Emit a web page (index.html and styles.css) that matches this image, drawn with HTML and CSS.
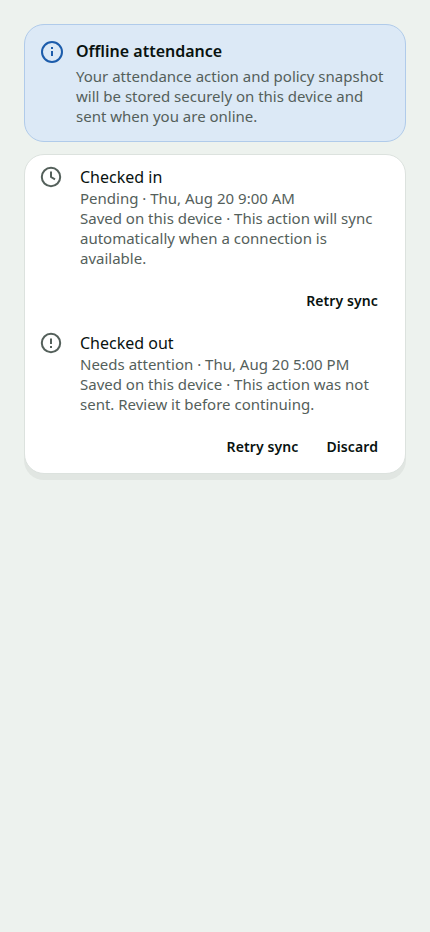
FILE: index.html
```html
<!DOCTYPE html>
<html lang="en">
<head>
<meta charset="utf-8">
<title>Offline attendance</title>
<link rel="stylesheet" href="styles.css">
</head>
<body>
<main class="page">
  <section class="notice">
    <svg class="notice-icon" viewBox="0 0 24 24"><circle cx="12" cy="12" r="10"/><path d="M12 11v5M12 7v2"/></svg>
    <div>
      <h1 class="notice-title">Offline attendance</h1>
      <p class="notice-text">Your attendance action and policy snapshot will be stored securely on this device and sent when you are online.</p>
    </div>
  </section>
  <section class="card">
    <article class="entry">
      <svg class="entry-icon" viewBox="0 0 22 22"><circle cx="11" cy="11" r="9.2"/><path d="M11 5.5V11l4 2.4"/></svg>
      <div>
        <h2 class="entry-title">Checked in</h2>
        <p class="entry-text">Pending · Thu, Aug 20 9:00 AM<br>Saved on this device · This action will sync automatically when a connection is available.</p>
      </div>
    </article>
    <div class="actions"><button>Retry sync</button></div>
    <article class="entry">
      <svg class="entry-icon" viewBox="0 0 22 22"><circle cx="11" cy="11" r="9.2"/><path d="M11 6.5V12M11 14v2"/></svg>
      <div>
        <h2 class="entry-title">Checked out</h2>
        <p class="entry-text">Needs attention · Thu, Aug 20 5:00 PM<br>Saved on this device · This action was not sent. Review it before continuing.</p>
      </div>
    </article>
    <div class="actions"><button>Retry sync</button><button>Discard</button></div>
  </section>
</main>
</body>
</html>
```
FILE: styles.css
```css
* { box-sizing: border-box; }
body { margin: 0; background: #edf2ee; font-family: "Noto Sans", sans-serif; color: #08120f; }
.page { min-height: 100vh; padding: 24px; display: flex; flex-direction: column; gap: 12px; }
h1, h2, p { margin: 0; }
svg { fill: none; stroke: currentColor; stroke-width: 2; stroke-linejoin: round; flex: none; }
.notice { display: flex; gap: 12px; padding: 15px; height: 118px; border: 1px solid #b0cbea; border-radius: 20px; background: #dce9f6; }
.notice-icon { width: 24px; height: 24px; color: #1c5cab; }
.notice-title { font-size: 16px; line-height: 22px; font-weight: 600; }
.notice-text, .entry-text { font-size: 15px; line-height: 20px; font-weight: 400; color: #54605b; }
.notice-text { margin-top: 4px; }
.card { height: 320px; border: 1px solid #dce2de; border-radius: 20px; background: #fff; box-shadow: 0 6px 0 #e1e6e2; }
.entry { display: flex; gap: 18px; padding: 11px 15px 0; }
.entry-icon { width: 22px; height: 22px; color: #54605b; }
.entry-title { font-size: 16px; line-height: 22px; font-weight: 400; }
.actions { display: flex; justify-content: flex-end; gap: 28px; padding: 23px 27px 10px; }
.actions button { border: 0; padding: 0; background: none; color: inherit; font: 600 14px/20px "Noto Sans", sans-serif; letter-spacing: .1px; }
```
